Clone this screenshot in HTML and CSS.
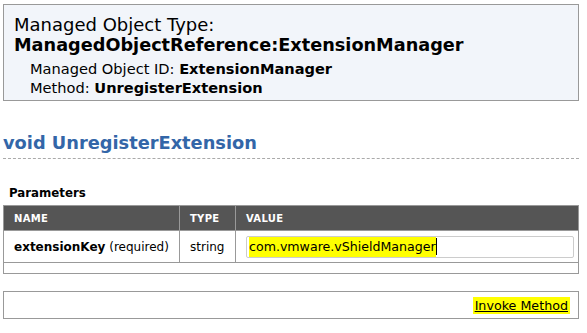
FILE: index.html
```html
<!DOCTYPE html>
<html>
<head>
<meta charset="utf-8">
<link rel="stylesheet" href="styles.css">
</head>
<body>
<div class="page">
  <div class="header">
    <div class="type-label">Managed Object Type:</div>
    <div class="type-name">ManagedObjectReference:ExtensionManager</div>
    <div class="meta first">Managed Object ID: <b>ExtensionManager</b></div>
    <div class="meta">Method: <b>UnregisterExtension</b></div>
  </div>
  <h1 class="method-title">void UnregisterExtension</h1>
  <div class="params-title">Parameters</div>
  <table class="params">
    <thead>
      <tr><th class="c-name">NAME</th><th class="c-type">TYPE</th><th class="c-value">VALUE</th></tr>
    </thead>
    <tbody>
      <tr>
        <td class="c-name"><b>extensionKey</b> (required)</td>
        <td class="c-type">string</td>
        <td class="c-value"><div class="input"><span class="hl">com.vmware.vShieldManager</span><span class="caret"></span></div></td>
      </tr>
      <tr class="empty"><td colspan="3"></td></tr>
    </tbody>
  </table>
  <div class="invoke-box">
    <a class="invoke hl" href="#">Invoke Method</a>
  </div>
</div>
</body>
</html>
```
FILE: styles.css
```css
html, body {
  margin: 0;
  padding: 0;
  background: #fff;
}
body {
  font-family: "DejaVu Sans", Verdana, sans-serif;
  color: #000;
}
.page {
  padding: 4px 8px 0 3px;
}
.header {
  background: #f2f5fa;
  border: 1px solid #999;
  padding: 10px 10px 3px 10px;
}
.type-label {
  font-size: 18px;
  line-height: 20px;
}
.type-name {
  font-size: 17.7px;
  line-height: 20px;
  font-weight: bold;
}
.meta {
  font-size: 14.6px;
  line-height: 19px;
  padding-left: 16px;
}
.meta.first {
  margin-top: 4px;
}
.meta b { font-weight: bold; }
.method-title {
  margin: 31px 0 0 0;
  font-size: 17.8px;
  line-height: 22px;
  color: #3366a8;
  font-weight: bold;
  padding-bottom: 4px;
  border-bottom: 1px dashed #aaa;
}
.params-title {
  margin-top: 26px;
  padding-left: 6px;
  font-size: 11.8px;
  line-height: 16px;
  font-weight: bold;
}
.params {
  margin-top: 4px;
  width: 100%;
  border-collapse: collapse;
  border: 1px solid #999;
  font-size: 12px;
}
.params th {
  background: #555;
  color: #fff;
  font-size: 10px;
  font-weight: bold;
  text-align: left;
  height: 24px;
  padding: 0 10px;
  border: 1px solid #999;
  letter-spacing: 0.3px;
}
.params td {
  border: 1px solid #999;
  padding: 0 10px;
  height: 31px;
  font-size: 12px;
}
.params .c-name { width: 155px; }
.params .c-type { width: 35px; }
.params td.c-value { padding: 0 4px 0 10px; }
.params tr.empty td { height: 10px; padding: 0; }
.input {
  border: 1px solid #ccc;
  border-radius: 2px;
  height: 20px;
  line-height: 20px;
  padding: 0 3px 0 2px;
  font-size: 12.6px;
  display: flex;
  align-items: center;
}
.hl { background: #ffff00; }
.caret {
  display: inline-block;
  width: 1px;
  height: 17px;
  background: #000;
}
.invoke-box {
  margin-top: 17px;
  border: 1px solid #999;
  height: 26px;
  display: flex;
  align-items: center;
  justify-content: flex-end;
  padding-right: 8px;
}
.invoke {
  color: #000;
  font-size: 12.7px;
  text-decoration: underline;
  padding: 1px 2px;
}
```
